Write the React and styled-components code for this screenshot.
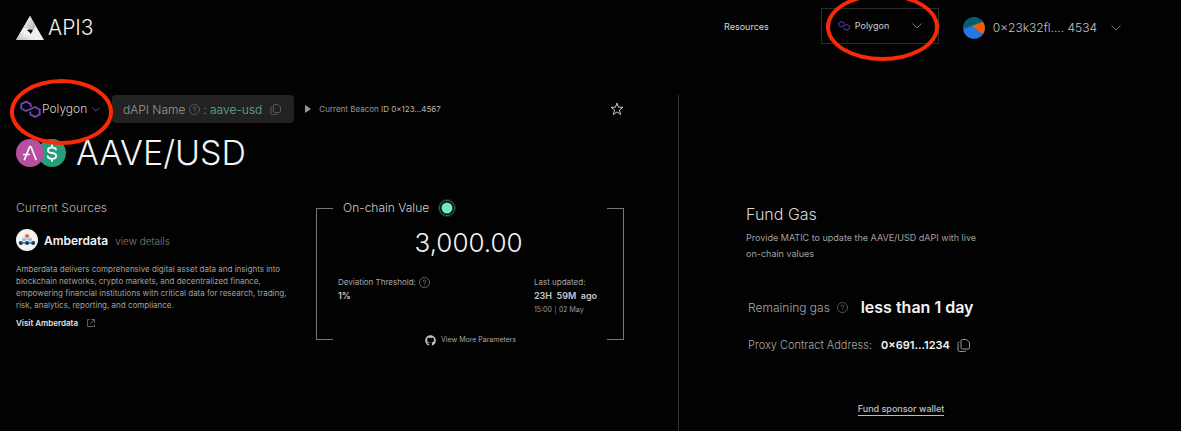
import React from "react";
import styled, { createGlobalStyle } from "styled-components";
import { FaGithub } from "react-icons/fa";

const GlobalStyle = createGlobalStyle`
  *, *::before, *::after { box-sizing: border-box; }
  body {
    margin: 0;
    background: #020202;
    color: #d8d8d8;
    font-family: "Inter", "Liberation Sans", sans-serif;
    font-weight: 300;
    overflow-x: hidden;
  }
  h1, h2, h3, p, dl, dd { margin: 0; font-weight: 300; }
`;

const Page = styled.div`
  min-height: 100vh;
  display: flex;
  flex-direction: column;
`;

const Header = styled.header`
  display: flex;
  align-items: center;
  justify-content: space-between;
  height: 52px;
  padding: 0 60px 0 16px;
  margin-bottom: 43px;
`;

const Brand = styled.a`
  display: flex;
  align-items: center;
  gap: 4px;
  padding-top: 4px;
  color: #f2f2f2;
  font-size: 21px;
  line-height: 24px;
  text-decoration: none;
`;

const Nav = styled.nav`
  display: flex;
  align-items: center;
`;

const NavLink = styled.a`
  margin-right: 52px;
  color: #d8d8d8;
  font-size: 9px;
  font-weight: 400;
  text-decoration: none;
`;

const Picker = styled.div`
  position: relative;
  display: flex;
  align-items: center;
  justify-content: space-between;
  flex: none;
  width: ${(p) => (p.$boxed ? "118px" : "96px")};
  height: ${(p) => (p.$boxed ? "36px" : "28px")};
  padding: ${(p) => (p.$boxed ? "0 16px" : "0 12px 0 4px")};
  border: ${(p) => (p.$boxed ? "1px solid #2b2b2b" : "0")};

  select {
    flex: 1;
    min-width: 0;
    margin-left: ${(p) => (p.$boxed ? "5px" : "1px")};
    padding: 0;
    border: 0;
    background: transparent;
    color: #d0d0d0;
    font: inherit;
    font-size: ${(p) => (p.$boxed ? "9px" : "12px")};
    font-weight: ${(p) => (p.$boxed ? 400 : 300)};
    line-height: 16px;
    appearance: none;
  }
`;

const Highlight = styled.span`
  position: absolute;
  z-index: 2;
  left: ${(p) => (p.$boxed ? "4px" : "-6px")};
  top: -16px;
  width: ${(p) => (p.$boxed ? "113px" : "103px")};
  height: ${(p) => (p.$boxed ? "68px" : "66px")};
  border: 4px solid #fc2a04;
  border-radius: 50%;
  pointer-events: none;
`;

const Account = styled.button`
  display: flex;
  align-items: center;
  margin-left: 24px;
  padding: 4px 0 0;
  border: 0;
  background: none;
  color: #c4c4c4;
  font: inherit;
  font-size: 12px;
  line-height: 22px;
  white-space: pre;

  span { margin: 0 14px 0 8px; }
`;

const Main = styled.main`
  flex: 1;
  display: grid;
  grid-template-columns: 23fr 17fr;
`;

const FeedPanel = styled.section`
  padding: 0 54px 0 16px;
  border-right: 1px solid #333;
`;

const FeedBar = styled.div`
  display: flex;
  align-items: center;
  height: 28px;
`;

const NameChip = styled.div`
  display: flex;
  align-items: center;
  height: 28px;
  padding: 0 13px 0 11px;
  border-radius: 4px;
  background: #222;
  color: #999;
  font-size: 12px;
  white-space: pre;
`;

const FeedName = styled.span`
  margin-right: 8px;
  color: #5fae98;
`;

const IconButton = styled.button`
  display: flex;
  flex: none;
  padding: 0;
  border: 0;
  background: none;
  color: ${(p) => p.$color || "#666"};
`;

const Beacon = styled.details`
  margin-left: 11px;
  color: #999;
  font-size: 8px;
  font-weight: 400;

  summary {
    display: flex;
    align-items: center;
    gap: 8px;
    list-style: none;
  }
  b { font-weight: 400; color: #b5b5b5; }
`;

const Spacer = styled.div`
  flex: 1;
`;

const TitleRow = styled.div`
  display: flex;
  align-items: center;
  gap: 10px;
  margin-top: 9px;
`;

const Title = styled.h1`
  color: #f4f4f4;
  font-size: 34px;
  line-height: 42px;
`;

const Columns = styled.div`
  display: grid;
  grid-template-columns: 1fr 308px;
  gap: 24px;
  margin-top: 26px;
`;

const SectionTitle = styled.h2`
  color: #b0b0b0;
  font-size: 12px;
  line-height: 16px;
`;

const Source = styled.div`
  display: flex;
  align-items: center;
  margin: 13px 0 12px;

  h3 {
    margin: 0 7px 0 6px;
    color: #f4f4f4;
    font-size: 12px;
    font-weight: 600;
  }
  a {
    padding-top: 2px;
    color: #808080;
    font-size: 10px;
    text-decoration: none;
  }
`;

const SourceText = styled.p`
  color: #a0a0a0;
  font-size: 8px;
  font-weight: 400;
  line-height: 12px;
`;

const VisitLink = styled.a`
  display: flex;
  align-items: center;
  gap: 9px;
  margin-top: 6px;
  color: #e4e4e4;
  font-size: 8px;
  font-weight: 600;
  line-height: 12px;
  text-decoration: none;
`;

const ValueCard = styled.section`
  --edge: linear-gradient(#777, #777);
  display: flex;
  flex-direction: column;
  height: 132px;
  margin-top: 8px;
  padding: 0 24px 0 21px;
  border: solid #777;
  border-width: 0 1px;
  background:
    var(--edge) left top / 16px 1px no-repeat,
    var(--edge) right top / 16px 1px no-repeat,
    var(--edge) left bottom / 16px 1px no-repeat,
    var(--edge) right bottom / 16px 1px no-repeat;
`;

const ValueHeading = styled.div`
  display: flex;
  align-items: center;
  gap: 8px;
  margin: -10px 0 0 5px;

  h2 { color: #d0d0d0; line-height: 20px; }
`;

const Value = styled.p`
  margin-top: 8px;
  color: #f4f4f4;
  font-size: 26px;
  line-height: 34px;
  text-align: center;
`;

const Facts = styled.dl`
  display: flex;
  justify-content: space-between;
  margin-top: 15px;
  padding-right: 2px;
  font-size: 9px;
  line-height: 14px;

  dt {
    display: flex;
    align-items: center;
    gap: 3px;
    color: #a8a8a8;
    font-size: 8px;
    font-weight: 400;
  }
  svg { color: #808080; }
  dd { color: #c8c8c8; font-weight: 600; white-space: pre; }
`;

const Stamp = styled.dd`
  && {
    display: flex;
    align-items: center;
    gap: 3px;
    color: #999;
    font-size: 7px;
    font-weight: 400;
  }
  i { width: 1px; height: 8px; background: #444; }
`;

const MoreLink = styled.a`
  display: flex;
  align-items: center;
  align-self: center;
  gap: 5px;
  margin: auto 0 -7px;
  padding-left: 4px;
  color: #a8a8a8;
  font-size: 7px;
  font-weight: 400;
  line-height: 14px;
  text-decoration: none;
`;

const GasPanel = styled.section`
  display: flex;
  flex-direction: column;
  max-width: 377px;
  padding: 109px 0 0 67px;

  h2 { color: #d8d8d8; font-size: 16px; line-height: 20px; }
`;

const GasText = styled.p`
  max-width: 240px;
  margin: 6px 0 33px;
  color: #a0a0a0;
  font-size: 9px;
  font-weight: 400;
  line-height: 16px;
`;

const GasRow = styled.div`
  display: flex;
  align-items: center;
  height: 24px;
  margin: 0 0 14px 2px;
  color: #a8a8a8;
  font-size: ${(p) => (p.$small ? "11px" : "12px")};
  white-space: nowrap;

  strong {
    margin: ${(p) => (p.$small ? "0 7px 0 9px" : "0 0 0 13px")};
    color: #f4f4f4;
    font-size: ${(p) => (p.$small ? "11px" : "16px")};
    font-weight: 600;
  }
`;

const WalletLink = styled.a`
  align-self: center;
  margin-top: 32px;
  border-bottom: 1px solid #bbb;
  color: #c0c0c0;
  font-size: 9px;
  font-weight: 500;
  line-height: 12px;
  text-decoration: none;
`;

const ApiLogo = () => (
  <svg width="28" height="26" viewBox="0 0 28 26" aria-hidden="true">
    <defs>
      <linearGradient id="fold" x1="0" y1="0" x2="1" y2="1">
        <stop offset="0" stopColor="#fff" />
        <stop offset="1" stopColor="#aaa" />
      </linearGradient>
      <linearGradient id="base" x1="0" y1="1" x2="1" y2="0">
        <stop offset="0" stopColor="#bbb" />
        <stop offset=".5" stopColor="#f2f2f2" />
      </linearGradient>
    </defs>
    <path d="M14 1 28 25H0Z" fill="#eee" />
    <path d="M14 1 7 13Q12 13 14 17L16 16Q20 13 19 10Z" fill="url(#fold)" />
    <path d="M7 13 0 25H22Q13 22 14 17 12 13 7 13Z" fill="url(#base)" />
    <path d="M11 15.500Q14 13.500 17 15.500L14.500 19Q14 16.500 11 15.500Z" fill="#0a0a0a" />
  </svg>
);

const PolygonIcon = ({ size, color }) => (
  <svg width={size} height={size} viewBox="0 0 21 21" fill="none" stroke={color} strokeWidth="1.900" strokeLinejoin="round" aria-hidden="true">
    <path d="M10.700 8V5.200L6 2.700 1.300 5.200V9.500L6 12 15 8 19.700 10.500V15.300L15 17.900 10.300 15.300V12.500" />
  </svg>
);

const Chevron = ({ width = 8 }) => (
  <svg width={width} height={width / 2 + 1} viewBox="0 0 10 6" fill="none" stroke="#777" strokeWidth="1" aria-hidden="true">
    <path d="M.5.5 5 5 9.500.5" />
  </svg>
);

const HelpIcon = () => (
  <svg width="11" height="11" viewBox="0 0 24 24" fill="none" stroke="currentColor" strokeWidth="1.700" strokeLinecap="round" aria-hidden="true">
    <circle cx="12" cy="12" r="11" />
    <path d="M9 9.500a3 3 0 0 1 6 0c0 2-3 2.500-3 4.500M12 17.500h.01" />
  </svg>
);

const CopyIcon = ({ size }) => (
  <svg width={size} height={size} viewBox="0 0 13 13" fill="none" stroke="currentColor" strokeLinejoin="round" aria-hidden="true">
    <path d="M5.500.5H9.500L12.500 3.500V8.500Q12.500 10 11 10H5.500Q4 10 4 8.500V2Q4 .5 5.500.5ZM2.500 3Q1 3 1 4.500V11Q1 12.500 2.500 12.500H7.500Q9 12.500 9 11.500" />
  </svg>
);

const StarIcon = () => (
  <svg width="14" height="14" viewBox="0 0 14 14" fill="none" stroke="#c8c8c8" aria-hidden="true">
    <path d="M7 1 8.500 5.200 13 5.300 9.400 8.100 10.700 12.500 7 9.900 3.300 12.500 4.600 8.100 1 5.300 5.500 5.200Z" />
  </svg>
);

const Tokens = () => (
  <svg width="50" height="28" viewBox="0 0 50 28" fill="none" strokeLinecap="round" aria-hidden="true">
    <circle cx="36" cy="14" r="14" fill="#259f7b" />
    <circle cx="14" cy="14" r="14" fill="#b6509e" />
    <path d="M8.500 20.500 13.300 8.500Q14.300 6.500 15.300 8.500L20 20.500M7.800 15.500H13" stroke="#fff" strokeWidth="1.700" />
    <path d="M40 10.500Q39.300 8.500 36 8.500 32 8.500 32 11.200 32 13.500 36 14 40.200 14.500 40.200 17 40.200 19.800 36 19.800 32.200 19.800 31.700 17.300M36 6V8.500M36 19.800V22" stroke="#fff" strokeWidth="1.800" />
  </svg>
);

const Avatar = () => (
  <svg width="22" height="22" viewBox="0 0 22 22" aria-hidden="true">
    <clipPath id="disc"><circle cx="11" cy="11" r="10.800" /></clipPath>
    <g clipPath="url(#disc)">
      <path d="M0 0H22V22H0Z" fill="#2378e1" />
      <path d="M0 12 22 4V0H0Z" fill="#035e67" />
      <path d="M9 9 22 4V19Z" fill="#fa5b05" />
    </g>
  </svg>
);

const AmberdataLogo = () => (
  <svg width="22" height="22" viewBox="0 0 22 22" aria-hidden="true">
    <circle cx="11" cy="11" r="11" fill="#f2f2f2" />
    <path d="M5 14H17" stroke="#1b3a68" />
    <path d="M8 10.500H14" stroke="#8ec6e4" />
    <circle cx="11" cy="7" r="2.100" fill="#f26a36" />
    <g fill="#8ec6e4"><circle cx="8" cy="10.500" r="2" /><circle cx="14" cy="10.500" r="2" /></g>
    <g fill="#1b3a68"><circle cx="4.800" cy="14" r="2" /><circle cx="11" cy="14" r="2" /><circle cx="17.200" cy="14" r="2" /></g>
  </svg>
);

const StatusDot = () => (
  <svg width="20" height="20" viewBox="0 0 20 20" aria-hidden="true">
    <circle cx="10" cy="10" r="8.500" fill="#051814" stroke="#0c332b" strokeWidth="1" />
    <circle cx="10" cy="10" r="7.500" fill="#020806" stroke="#24705f" strokeWidth="1" />
    <circle cx="10" cy="10" r="5.500" fill="#7ce3cb" />
  </svg>
);

const ExternalIcon = () => (
  <svg width="8" height="8" viewBox="0 0 8 8" fill="none" stroke="#777" aria-hidden="true">
    <path d="M2.500.5H.5V7.500H7.500V5.500M4 .5H7.500V4M7.500.5 3 5" strokeWidth=".8" />
  </svg>
);

function NetworkPicker({ boxed, label }) {
  return (
    <Picker $boxed={boxed}>
      <PolygonIcon size={boxed ? 12 : 21} color={boxed ? "#56309b" : "#6f45b8"} />
      <select aria-label={label} defaultValue="polygon">
        <option value="polygon">Polygon</option>
      </select>
      <Chevron width={boxed ? 10 : 8} />
      <Highlight $boxed={boxed} />
    </Picker>
  );
}

export default function App() {
  return (
    <Page>
      <GlobalStyle />
      <Header>
        <Brand href="#"><ApiLogo />API3</Brand>
        <Nav>
          <NavLink href="#resources">Resources</NavLink>
          <NetworkPicker boxed label="Network" />
          <Account type="button" aria-haspopup="menu">
            <Avatar />
            <span>0×23k32fl.... 4534</span>
            <Chevron width={10} />
          </Account>
        </Nav>
      </Header>
      <Main>
        <FeedPanel>
          <FeedBar>
            <NetworkPicker label="Feed network" />
            <NameChip>
              {"dAPI Name "}
              <IconButton type="button" aria-label="About dAPI names"><HelpIcon /></IconButton>
              {" : "}
              <FeedName>aave-usd</FeedName>
              <IconButton type="button" aria-label="Copy dAPI name"><CopyIcon size={11} /></IconButton>
            </NameChip>
            <Beacon>
              <summary>
                <svg width="6" height="8" viewBox="0 0 6 8" fill="#999" aria-hidden="true"><path d="M0 0 6 4 0 8Z" /></svg>
                <span>Current Beacon <b>ID 0×123...4567</b></span>
              </summary>
            </Beacon>
            <Spacer />
            <IconButton type="button" aria-label="Add to favourites"><StarIcon /></IconButton>
          </FeedBar>
          <TitleRow>
            <Tokens />
            <Title>AAVE/USD</Title>
          </TitleRow>
          <Columns>
            <section>
              <SectionTitle>Current Sources</SectionTitle>
              <Source>
                <AmberdataLogo />
                <h3>Amberdata</h3>
                <a href="#details">view details</a>
              </Source>
              <SourceText>
                Amberdata delivers comprehensive digital asset data and insights into
                blockchain networks, crypto markets, and decentralized finance,
                empowering financial institutions with critical data for research, trading,
                risk, analytics, reporting, and compliance.
              </SourceText>
              <VisitLink href="#amberdata">Visit Amberdata<ExternalIcon /></VisitLink>
            </section>
            <ValueCard>
              <ValueHeading>
                <SectionTitle>On-chain Value</SectionTitle>
                <StatusDot />
              </ValueHeading>
              <Value>3,000.00</Value>
              <Facts>
                <div>
                  <dt>Deviation Threshold: <HelpIcon /></dt>
                  <dd>1%</dd>
                </div>
                <div>
                  <dt>Last updated:</dt>
                  <dd>{"23H  59M  ago"}</dd>
                  <Stamp>15:00<i />02 May</Stamp>
                </div>
              </Facts>
              <MoreLink href="#parameters"><FaGithub size={11} color="#c0c0c0" />View More Parameters</MoreLink>
            </ValueCard>
          </Columns>
        </FeedPanel>
        <GasPanel>
          <h2>Fund Gas</h2>
          <GasText>Provide MATIC to update the AAVE/USD dAPI with live on-chain values</GasText>
          <GasRow>
            <span>Remaining gas&nbsp;&nbsp;</span>
            <IconButton type="button" aria-label="About remaining gas"><HelpIcon /></IconButton>
            <strong>less than 1 day</strong>
          </GasRow>
          <GasRow $small>
            Proxy Contract Address: <strong>0×691...1234</strong>
            <IconButton type="button" $color="#999" aria-label="Copy address"><CopyIcon size={13} /></IconButton>
          </GasRow>
          <WalletLink href="#fund">Fund sponsor wallet</WalletLink>
        </GasPanel>
      </Main>
    </Page>
  );
}
